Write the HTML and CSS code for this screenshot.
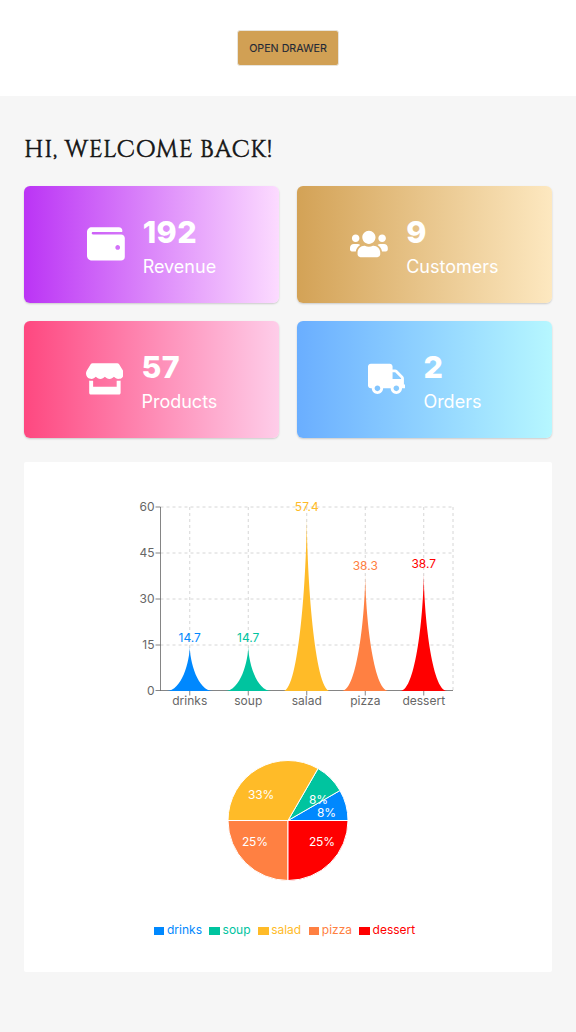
FILE: index.html
```
<!DOCTYPE html>
<html lang="en">
<head>
<meta charset="utf-8">
<title>Dashboard</title>
<link rel="stylesheet" href="styles.css">
</head>
<body>
<header class="topbar"><button class="drawer-btn" type="button">OPEN DRAWER</button></header>
<main class="dashboard">
  <h1 class="title">HI, WELCOME BACK!</h1>
  <section class="stats">
    <article class="stat revenue">
      <svg class="icon" viewBox="0 0 512 512"><path d="M461.2 128H80c-8.84 0-16-7.16-16-16s7.16-16 16-16h384c8.84 0 16-7.16 16-16 0-26.51-21.49-48-48-48H64C28.65 32 0 60.65 0 96v320c0 35.35 28.65 64 64 64h397.2c28.02 0 50.8-21.53 50.8-48V176c0-26.47-22.78-48-50.8-48zM416 336c-17.67 0-32-14.33-32-32s14.33-32 32-32 32 14.33 32 32-14.33 32-32 32z"/></svg>
      <div><div class="value">192</div><div class="label">Revenue</div></div>
    </article>
    <article class="stat customers">
      <svg class="icon" viewBox="0 0 640 512"><path d="M96 224c35.3 0 64-28.7 64-64s-28.7-64-64-64-64 28.7-64 64 28.7 64 64 64zm448 0c35.3 0 64-28.7 64-64s-28.7-64-64-64-64 28.7-64 64 28.7 64 64 64zm32 32h-64c-17.6 0-33.5 7.1-45.1 18.6 40.3 22.1 68.9 62 75.1 109.4h66c17.7 0 32-14.3 32-32v-32c0-35.3-28.7-64-64-64zm-256 0c61.9 0 112-50.1 112-112S381.9 32 320 32 208 82.1 208 144s50.1 112 112 112zm76.8 32h-8.3c-20.8 10-43.9 16-68.5 16s-47.6-6-68.5-16h-8.3C179.6 288 128 339.6 128 403.2V432c0 26.5 21.5 48 48 48h288c26.5 0 48-21.5 48-48v-28.8c0-63.6-51.6-115.2-115.2-115.2zm-223.7-13.4C161.5 263.1 145.6 256 128 256H64c-35.3 0-64 28.7-64 64v32c0 17.7 14.3 32 32 32h65.9c6.3-47.4 34.9-87.3 75.2-109.4z"/></svg>
      <div><div class="value">9</div><div class="label">Customers</div></div>
    </article>
    <article class="stat products">
      <svg class="icon" viewBox="0 0 616 512"><path d="M602 118.6L537.1 15C531.3 5.7 521 0 510 0H106C95 0 84.7 5.7 78.9 15L14 118.6c-33.5 53.5-3.8 127.9 58.8 136.4 4.5.6 9.1.9 13.7.9 29.6 0 55.8-13 73.8-33.1 18 20.1 44.3 33.1 73.8 33.1 29.6 0 55.8-13 73.8-33.1 18 20.1 44.3 33.1 73.8 33.1 29.6 0 55.8-13 73.8-33.1 18.1 20.1 44.3 33.1 73.8 33.1 4.7 0 9.2-.3 13.7-.9 62.8-8.4 92.6-82.8 59-136.4zM529.5 288c-10 0-19.9-1.5-29.5-3.8V384H116v-99.8c-9.6 2.2-19.5 3.8-29.5 3.8-6 0-12.1-.4-18-1.2-5.6-.8-11.1-2.1-16.4-3.6V480c0 17.7 14.3 32 32 32h448c17.7 0 32-14.3 32-32V283.2c-5.4 1.6-10.8 2.9-16.4 3.6-6.1.8-12.1 1.2-18.2 1.2z"/></svg>
      <div><div class="value">57</div><div class="label">Products</div></div>
    </article>
    <article class="stat orders">
      <svg class="icon" viewBox="0 0 640 512"><path d="M624 352h-16V243.9c0-12.7-5.1-24.9-14.1-33.9L494 110.1c-9-9-21.2-14.1-33.9-14.1H416V48c0-26.5-21.5-48-48-48H48C21.5 0 0 21.5 0 48v320c0 26.5 21.5 48 48 48h16c0 53 43 96 96 96s96-43 96-96h128c0 53 43 96 96 96s96-43 96-96h48c8.8 0 16-7.2 16-16v-32c0-8.8-7.2-16-16-16zM160 464c-26.5 0-48-21.5-48-48s21.5-48 48-48 48 21.5 48 48-21.5 48-48 48zm320 0c-26.5 0-48-21.5-48-48s21.5-48 48-48 48 21.5 48 48-21.5 48-48 48zm80-208H416V144h44.1l99.9 99.9V256z"/></svg>
      <div><div class="value">2</div><div class="label">Orders</div></div>
    </article>
  </section>
  <section class="charts">
    <svg class="bars" width="528" height="258" viewBox="24 462 528 258">
      <g class="grid">
        <path d="M160.5 507H453M160.5 553H453M160.5 599H453M160.5 645H453"/>
        <path d="M189.75 507V691M248.25 507V691M306.75 507V691M365.25 507V691M423.75 507V691M453 507V691"/>
      </g>
      <g class="axis">
        <path d="M160.5 507V691M160.5 690.5H453"/>
        <path d="M155.5 507h5M155.5 553h5M155.5 599h5M155.5 645h5M155.5 690.5h5"/>
        <path d="M189.75 691v4.5M248.25 691v4.5M306.75 691v4.5M365.25 691v4.5M423.75 691v4.5"/>
      </g>
      <path class="c-drinks" d="M166.35 691C181.95 691 189.75 661 189.75 646C189.75 661 197.55 691 213.15 691Z"/>
      <path class="c-soup" d="M224.85 691C240.45 691 248.25 661 248.25 646C248.25 661 256.05 691 271.65 691Z"/>
      <path class="c-salad" d="M283.35 691C298.95 691 306.75 573.7 306.75 515C306.75 573.7 314.55 691 330.15 691Z"/>
      <path class="c-pizza" d="M341.85 691C357.45 691 365.25 612.7 365.25 573.5C365.25 612.7 373.05 691 388.65 691Z"/>
      <path class="c-dessert" d="M400.35 691C415.95 691 423.75 611.9 423.75 572.3C423.75 611.9 431.55 691 447.15 691Z"/>
      <g class="ticks end">
        <text x="154.5" y="511">60</text><text x="154.5" y="557">45</text><text x="154.5" y="603">30</text><text x="154.5" y="649">15</text><text x="154.5" y="695">0</text>
      </g>
      <g class="ticks mid">
        <text x="189.75" y="705">drinks</text><text x="248.25" y="705">soup</text><text x="306.75" y="705">salad</text><text x="365.25" y="705">pizza</text><text x="423.75" y="705">dessert</text>
      </g>
      <g class="mid">
        <text class="c-drinks" x="189.75" y="642">14.7</text><text class="c-soup" x="248.25" y="642">14.7</text><text class="c-salad" x="306.75" y="511">57.4</text><text class="c-pizza" x="365.25" y="570">38.3</text><text class="c-dessert" x="423.75" y="568">38.7</text>
      </g>
    </svg>
    <svg class="pie" width="140" height="141" viewBox="218 750 140 141">
      <g class="slices">
        <path class="c-drinks" d="M288 820.5H348A60 60 0 0 0 339.96 790.5Z"/>
        <path class="c-soup" d="M288 820.5L339.96 790.5A60 60 0 0 0 318 768.54Z"/>
        <path class="c-salad" d="M288 820.5L318 768.54A60 60 0 0 0 228 820.5Z"/>
        <path class="c-pizza" d="M288 820.5H228A60 60 0 0 0 288 880.5Z"/>
        <path class="c-dessert" d="M288 820.5V880.5A60 60 0 0 0 348 820.5Z"/>
      </g>
      <g class="percent">
        <text x="317" y="817">8%</text><text x="309" y="804">8%</text><text x="248" y="799">33%</text><text x="242" y="846">25%</text><text x="309" y="846">25%</text>
      </g>
    </svg>
    <ul class="legend">
      <li class="k-drinks"><i></i>drinks</li>
      <li class="k-soup"><i></i>soup</li>
      <li class="k-salad"><i></i>salad</li>
      <li class="k-pizza"><i></i>pizza</li>
      <li class="k-dessert"><i></i>dessert</li>
    </ul>
  </section>
</main>
</body>
</html>
```
FILE: styles.css
```
* { box-sizing: border-box; }
body { margin: 0; background: #f6f6f6; font-family: Inter, sans-serif; }
.topbar { height: 96px; background: #fff; display: flex; justify-content: center; align-items: center; }
.drawer-btn { width: 102px; height: 36px; margin-right: 1px; padding: 2px 0 0 1px; border: 1px solid #e8e4dc; border-radius: 3px; background: #d1a054; color: #1f2937; font: 400 10.7px/1 Inter, sans-serif; -webkit-text-stroke: .1px #1f2937; }
.dashboard { min-height: 936px; padding: 37px 24px 60px; }
.title { margin: 0 0 19px; height: 34px; font: 400 24px/34px Cinzel, "Liberation Serif", serif; letter-spacing: .62px; -webkit-text-stroke: .6px #151515; color: #151515; white-space: nowrap; }
.stats { display: grid; grid-template-columns: 255px 255px; gap: 18px; }
.stat { height: 117px; display: flex; justify-content: center; align-items: center; gap: 18px; border-radius: 6px; color: #fff; box-shadow: 0 1px 2px rgba(0, 0, 0, .18); }
.revenue { background: linear-gradient(90deg, #bb34f5, #fcdbff); }
.customers { background: linear-gradient(90deg, #d3a256, #fde8c0); }
.products { background: linear-gradient(90deg, #fe4880, #fecde9); }
.orders { background: linear-gradient(90deg, #6aaeff, #b6f7ff); }
.icon { width: 37.8px; height: 37.8px; margin-bottom: .6px; fill: currentColor; }
.value { padding-top: 4px; font-size: 30.5px; line-height: 36px; font-weight: 800; letter-spacing: .5px; }
.label { font-size: 18px; line-height: 27px; margin-top: 3px; }
.charts { margin-top: 24px; height: 510px; background: #fff; display: flex; flex-direction: column; align-items: center; border-radius: 2px; }
.bars, .pie { display: block; font-size: 12px; }
.pie { margin-top: 30px; }
.grid path { fill: none; stroke: #ccc; stroke-dasharray: 3 3; stroke-width: .8; }
.axis path { fill: none; stroke: #666; stroke-width: .8; }
.ticks { fill: #666; }
.end { text-anchor: end; }
.mid { text-anchor: middle; }
.slices path { stroke: #fff; stroke-width: 1; }
.percent { fill: #fff; letter-spacing: -.2px; }
.c-drinks { fill: #0088fe; }
.c-soup { fill: #00c49f; }
.c-salad { fill: #ffbb28; }
.c-pizza { fill: #ff8042; }
.c-dessert { fill: #ff0000; }
.legend { list-style: none; margin: 30px 7px 0 0; padding: 0; display: flex; gap: 7.3px; font-size: 12px; line-height: 18px; }
.legend li { display: flex; align-items: center; gap: 2.6px; }
.legend i { width: 10.7px; height: 8px; margin-top: 2px; background: currentColor; }
.k-drinks { color: #0088fe; }
.k-soup { color: #00c49f; }
.k-salad { color: #ffbb28; }
.k-pizza { color: #ff8042; }
.k-dessert { color: #ff0000; }
```
